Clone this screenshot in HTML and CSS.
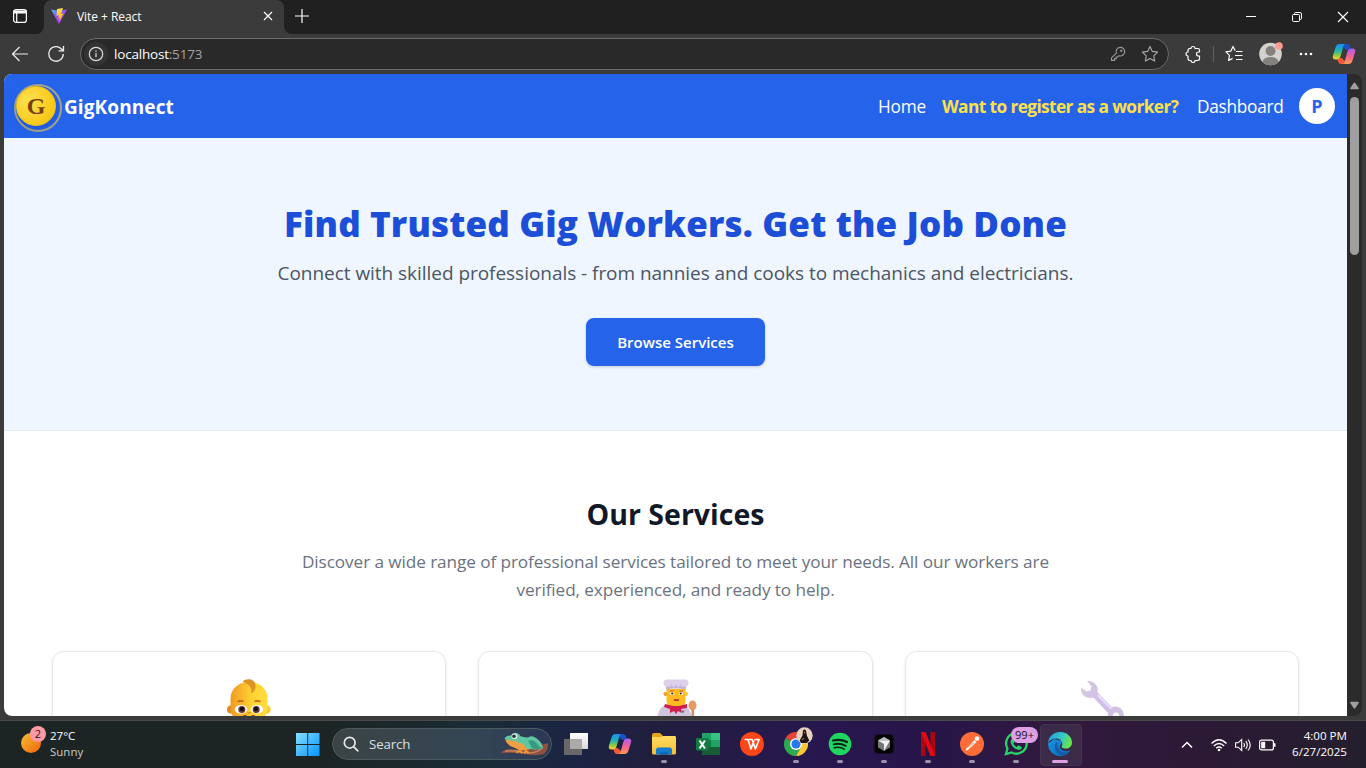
FILE: index.html
```
<!DOCTYPE html>
<html lang="en">
<head>
<meta charset="utf-8">
<title>Vite + React</title>
<link rel="stylesheet" href="styles.css">
</head>
<body>
<svg width="0" height="0" class="defs" aria-hidden="true">
  <defs>
    <linearGradient id="cpA" x1="0" y1="0" x2="0" y2="1"><stop offset="0" stop-color="#1b8df0"/><stop offset=".45" stop-color="#22b5b0"/><stop offset=".75" stop-color="#9acb3c"/><stop offset="1" stop-color="#ffd02e"/></linearGradient>
    <linearGradient id="cpB" x1="0" y1="0" x2="0" y2="1"><stop offset="0" stop-color="#b05cf0"/><stop offset=".5" stop-color="#f0609a"/><stop offset="1" stop-color="#ff9a52"/></linearGradient>
    <linearGradient id="skin" x1="0" y1="0" x2="1" y2="0"><stop offset="0" stop-color="#f09a22"/><stop offset=".6" stop-color="#ffd433"/><stop offset="1" stop-color="#ffdc3e"/></linearGradient>
    <symbol id="copilot" viewBox="0 0 24 24">
      <path fill="#1a4fc8" d="M11 2h4a3 3 0 0 1 2.800 2l1.200 4h-4.500L11 5z"/>
      <path fill="#f05a38" d="M13 22H9a3 3 0 0 1-2.800-2L5 16h4.500l3.500 3z"/>
      <path fill="url(#cpA)" d="M7.500 2H13.500c-1.500.3-1.900 1.300-2.200 2.400L8.800 13.500C8 16 6.800 17.500 4.500 17.500H3.500C1.200 17.500.3 16 .9 13.800L3.600 5.200C4.300 3 5.500 2 7.500 2z"/>
      <path fill="url(#cpB)" d="M16.500 22h-6c1.500-.3 1.900-1.300 2.200-2.400l2.500-9.100c.8-2.500 2-4 4.300-4h1c2.300 0 3.200 1.500 2.600 3.700l-2.700 8.600c-.7 2.200-1.900 3.200-3.900 3.200z"/>
    </symbol>
  </defs>
</svg>
<div class="browser">
  <div class="tabstrip">
    <div class="workspace">
      <svg width="16" height="16" viewBox="0 0 16 16" fill="none" stroke="#fff" stroke-width="1.200"><rect x="1.600" y="1.600" width="12.800" height="12.800" rx="2.500"/><path d="M2 3h12v2H2z" fill="#fff"/><path d="M4.700 5v9"/></svg>
    </div>
    <div class="tab">
      <svg width="16" height="16" viewBox="0 0 16 16"><defs><linearGradient id="v1" x1="0" y1="0" x2=".7" y2="1"><stop offset="0" stop-color="#41b8ff"/><stop offset=".5" stop-color="#9a50ff"/><stop offset="1" stop-color="#b636ff"/></linearGradient><linearGradient id="v2" x1="0" y1="0" x2="0" y2="1"><stop offset="0" stop-color="#ffe04a"/><stop offset="1" stop-color="#ffa800"/></linearGradient></defs><path fill="url(#v1)" d="M0 1.500L8 16l8-14.500L8 3z"/><path fill="url(#v2)" d="M12 0L6 1.100l-.4 6.700 2.300-.5-.7 3.200 1.600-.5-.9 4.300 4.600-8.700-2.500.5z"/></svg>
      <span class="tab-title">Vite + React</span>
      <svg width="10" height="10" viewBox="0 0 10 10" stroke="#fff" stroke-width="1.200"><path d="M1 1l8 8M9 1L1 9"/></svg>
    </div>
    <svg class="plus" width="14" height="14" viewBox="0 0 14 14" stroke="#fff" stroke-width="1.200"><path d="M7 0v14M0 7h14"/></svg>
    <div class="winctl">
      <svg width="12" height="12" viewBox="0 0 12 12" stroke="#fff" fill="none"><path d="M1 5.500h10"/></svg>
      <svg width="12" height="12" viewBox="0 0 12 12" stroke="#fff" fill="none"><rect x="1.500" y="3.500" width="7" height="7" rx="1"/><path d="M3.500 3.500V2.700A1.200 1.200 0 0 1 4.700 1.500H9A1.500 1.500 0 0 1 10.500 3v4.300A1.200 1.200 0 0 1 9.300 8.500h-.8"/></svg>
      <svg width="12" height="12" viewBox="0 0 12 12" stroke="#fff" stroke-width="1.200"><path d="M1 1l10 10M11 1L1 11"/></svg>
    </div>
  </div>
  <div class="toolbar">
    <svg class="back" width="18" height="16" viewBox="0 0 18 16" fill="none" stroke="#eee" stroke-width="1.200"><path d="M17 8H1.500M8.500 1l-7 7 7 7"/></svg>
    <svg class="reload" width="18" height="18" viewBox="0 0 18 18" fill="none" stroke="#eee" stroke-width="1.300"><path d="M16.300 9a7.300 7.300 0 1 1-2.100-5.200l1.800 1.900M16.500 1v4.900h-4.900"/></svg>
    <div class="urlbar">
      <span class="info"><svg width="16" height="16" viewBox="0 0 16 16" fill="none" stroke="#ddd" stroke-width="1.200"><circle cx="8" cy="8" r="6.700"/><path d="M8 7v4.200M8 4.600v1.300"/></svg></span>
      <span class="url">localhost<span class="port">:5173</span></span>
      <svg class="key" width="16" height="16" viewBox="0 0 16 16" fill="none" stroke="#999" stroke-width="1.100"><path d="M6.400 7.200A4.300 4.300 0 1 1 9 9.700L7.700 11H6.200v1.600H4.600v1.800H1.500v-2.500z"/><circle cx="11.300" cy="4.800" r=".6" fill="#999"/></svg>
      <svg class="star" width="18" height="18" viewBox="0 0 18 18" fill="none" stroke="#aaa" stroke-width="1.100" stroke-linejoin="round"><path d="M9 1.500l2.300 4.900 5.300.7-3.900 3.700 1 5.300L9 13.500l-4.700 2.600 1-5.300L1.400 7.100l5.300-.7z"/></svg>
    </div>
    <svg class="ext" width="16" height="18" viewBox="0 0 16 18" fill="none" stroke="#fff" stroke-width="1.200" stroke-linejoin="round"><path d="M6 3.500a2 2 0 0 1 4 0h2.800a1.700 1.700 0 0 1 1.700 1.700V7h-1a2 2 0 0 0 0 4h1v2.800a1.700 1.700 0 0 1-1.700 1.700H10a2 2 0 0 1-4 0H4.700A1.700 1.700 0 0 1 3 13.800V11a2 2 0 0 1 0-4V5.200a1.700 1.700 0 0 1 1.700-1.700z"/></svg>
    <span class="sep"></span>
    <svg class="favs" width="18" height="18" viewBox="0 0 18 18" fill="none" stroke="#fff" stroke-width="1.200" stroke-linejoin="round"><path d="M10.200 5.800L8 1.500 5.800 6.200l-4.900.7 3.600 3.500-.9 5.100 4-2.100M11 6.500h6.500M10 10.500h7.500M11 14.500h6.500"/></svg>
    <svg class="profile" width="24" height="24" viewBox="0 0 24 24"><clipPath id="pc"><circle cx="11.500" cy="12" r="11.300"/></clipPath><circle cx="11.500" cy="12" r="11.300" fill="#d4d2cf"/><g clip-path="url(#pc)" fill="#84817d"><circle cx="11.500" cy="9" r="5"/><ellipse cx="11.500" cy="20" rx="8" ry="5"/></g><circle cx="20" cy="4" r="3.800" fill="#ff9a94"/></svg>
    <svg class="more" width="14" height="4" viewBox="0 0 14 4" fill="#fff"><circle cx="2" cy="2" r="1.300"/><circle cx="7" cy="2" r="1.300"/><circle cx="12" cy="2" r="1.300"/></svg>
    <svg class="cp" width="24" height="24"><use href="#copilot"/></svg>
  </div>
  <div class="viewport">
    <main class="page">
      <header class="nav">
        <div class="coin"><span class="coin-face">G</span></div>
        <span class="brand">GigKonnect</span>
        <nav class="links"><a class="l-home">Home</a><a class="l-want">Want to register as a worker?</a><a class="l-dash">Dashboard</a><span class="avatar">P</span></nav>
      </header>
      <section class="hero">
        <h1>Find Trusted Gig Workers. Get the Job Done</h1>
        <p>Connect with skilled professionals - from nannies and cooks to mechanics and electricians.</p>
        <button>Browse Services</button>
      </section>
      <section class="services">
        <h2>Our Services</h2>
        <p class="line1">Discover a wide range of professional services tailored to meet your needs. All our workers are</p>
        <p class="line2">verified, experienced, and ready to help.</p>
        <div class="cards">
          <div class="card">
            <svg width="48" height="48" viewBox="0 0 48 48">
              <circle cx="6" cy="32.500" r="4" fill="#dc8b24"/><circle cx="41.500" cy="32.500" r="4" fill="#ffc62e"/>
              <path fill="url(#skin)" d="M5.500 31V22C5.500 11 14 5 24 5s18.500 6 18.500 17v9c0 10-8 15-18.500 15S5.500 41 5.500 31z"/>
              <path fill="#dc9427" d="M17.500 4.500C22 .5 30 2 30.500 8c.3 4-1.500 7.500-4.500 8.500 1.500-5-1-9-8.500-12z"/>
              <ellipse cx="16" cy="32.200" rx="6.300" ry="4.300" fill="#fff"/><ellipse cx="32" cy="32.200" rx="6.300" ry="4.300" fill="#fff"/>
              <circle cx="16.800" cy="32.500" r="3.500" fill="#6d3a3e"/><circle cx="31.200" cy="32.500" r="3.500" fill="#6d3a3e"/><circle cx="17" cy="32" r="2.200" fill="#160c14"/><circle cx="31" cy="32" r="2.200" fill="#160c14"/>
              <path d="M12.500 24.800q3-1.500 6-.3M29.500 24.500q3-1.200 6 .3" stroke="#c9661e" stroke-width="1.800" fill="none"/>
              <path d="M22.500 35.500q1.500 1.200 3 0" stroke="#e38b20" stroke-width="1.500" fill="none"/><path d="M18.500 38.700h3M26.500 38.700h3" stroke="#a4411d" stroke-width="1.300"/>
            </svg>
          </div>
          <div class="card">
            <svg width="48" height="48" viewBox="0 0 48 48">
              <path d="M6 46c0-12 4-18 12-19h11c8 1 12 7 12 19z" fill="#cfc5dc"/>
              <path d="M15.500 12h19v11q0 8-9.500 8t-9.500-8z" fill="#ffbd22"/><circle cx="14.500" cy="17" r="2" fill="#f0a020"/><circle cx="35" cy="17" r="2" fill="#ffc52d"/>
              <path d="M14 27l8 2h6l8-2v4l-6 1 1 4-4-2-2 3-2-3-4 2v-4l-6-2z" fill="#d01f4c"/>
              <path d="M15 8h20v4.500q-10-2-20 0z" fill="#c5b5dc"/><rect x="12.500" y="2.500" width="25" height="7" rx="3.500" fill="#dcd0eb"/><path d="M20 7v4M25 7v4M30 7v4" stroke="#b5a2cf" stroke-width=".6"/>
              <path d="M19 14h3.500M28.500 14h3.500" stroke="#a8601e" stroke-width="1"/><ellipse cx="21" cy="16.500" rx="2" ry="1.500" fill="#fff"/><ellipse cx="30" cy="16.500" rx="2" ry="1.500" fill="#fff"/><circle cx="21.200" cy="16.500" r="1.100" fill="#42232b"/><circle cx="29.800" cy="16.500" r="1.100" fill="#42232b"/><path d="M23 22.500q2.500 1.500 5 0" stroke="#b62d25" stroke-width="1.500" fill="none"/>
              <ellipse cx="41.500" cy="28.500" rx="4" ry="5" fill="#e69a66"/><path d="M40.500 32h2.500v14h-2.500z" fill="#dc8c58"/><circle cx="32" cy="34.500" r="1.300" fill="#7d718d"/>
            </svg>
          </div>
          <div class="card">
            <svg width="48" height="48" viewBox="0 0 48 48"><defs><linearGradient id="wr" x1="0" y1="0" x2="1" y2="1"><stop offset="0" stop-color="#d2cbd9"/><stop offset=".5" stop-color="#d3bdec"/><stop offset="1" stop-color="#cdc2d8"/></linearGradient></defs><path fill="url(#wr)" d="M9 4c7-1 12 5 10.300 11L34 30c6-2 12 2 12 9 0 6-4 8-8 8-6 0-9-5-8-11L15.500 20.500C8 22.500 2 17.500 3.200 10.500l5.300 4 4-1 1-4z"/><path d="M20 18l13.500 13.500" stroke="#e9dcfa" stroke-width="2.500"/><circle cx="38" cy="38.500" r="3" fill="#fff"/></svg>
          </div>
        </div>
      </section>
    </main>
    <div class="scrollbar">
      <svg width="9" height="8" viewBox="0 0 9 8" fill="#9f9f9f"><path d="M3.600 1q.9-1.200 1.800 0L8.700 6q.5 1.200-.7 1.200H1Q-.2 7.200.3 6z"/></svg>
      <span class="thumb"></span>
      <svg class="down" width="9" height="8" viewBox="0 0 9 8" fill="#9f9f9f"><path d="M3.600 7q.9 1.200 1.800 0L8.700 2Q9.200.8 8 .8H1Q-.2.8.3 2z"/></svg>
    </div>
  </div>
</div>
<footer class="taskbar">
  <div class="weather">
    <div class="sun"><span class="count">2</span></div>
    <div class="wtext"><span class="temp">27°C</span><span class="cond">Sunny</span></div>
  </div>
  <div class="apps">
    <div class="app"><svg width="24" height="24" viewBox="0 0 24 24"><defs><linearGradient id="win" gradientUnits="userSpaceOnUse" x1="0" y1="0" x2="24" y2="24"><stop stop-color="#8be2ff"/><stop offset="1" stop-color="#0092fa"/></linearGradient></defs><path fill="url(#win)" d="M0 1h11.300v11H0zM12.200 1h11.300v11H12.200zM0 13h11.300v11H0zM12.200 13h11.300v11H12.200z"/></svg></div>
    <div class="search">
      <svg width="16" height="16" viewBox="0 0 16 16" fill="none" stroke="#e8e8e8" stroke-width="1.700" stroke-linecap="round"><circle cx="6.700" cy="6.700" r="5.400"/><path d="M10.800 10.800l4 4"/></svg>
      <span class="sword">Search</span>
      <svg class="frog" width="48" height="24" viewBox="0 0 48 24"><path d="M0 21q3-4 9-4 10 1 18 1 8-1 13-5l7-2q1 6-4 11-7 2-17 .5-12-2.500-26-1.500z" fill="#8f513d"/><path d="M4 19.500q10-2 18 1 13 2 20-5" stroke="#c4836b" stroke-width="1.500" fill="none"/><path d="M4 7.500q2 6 9 8l6 3 10-1 3-4-12-6z" fill="#f0a043"/><path d="M3.500 7q1-3.500 6.500-3.500 2-3 5-2.500 3.500.3 4 3 4.500 1.500 8 1.500 4-2.500 8 .5 6 4 7 10-5 2.500-12 1-7 0-8-5-4-.2-7-3-5 0-11.500-2z" fill="#5fc6a1"/><path d="M27 8.500q6-1.500 9 3t6 4.500q-5 2-11 .5" fill="#379c7f"/><path d="M18 14l1 5M23 14l2 5M19 19l-4 1.500M19 19l2 2M25 19l3 2M25 19l-2 2" stroke="#f29935" stroke-width="1.800"/><circle cx="13.500" cy="4.200" r="2.900" fill="#dfeee6"/><circle cx="13" cy="4.200" r="1.800" fill="#253540"/></svg>
    </div>
    <div class="app"><svg width="24" height="24" viewBox="0 0 24 24"><defs><linearGradient id="tw" x1="0" y1="0" x2="0" y2="1"><stop stop-color="#fff"/><stop offset="1" stop-color="#d8d8d8"/></linearGradient></defs><rect x="6" y="1" width="18" height="16" fill="url(#tw)"/><rect x="0" y="7" width="18" height="16" fill="#686868"/><path d="M6 7h12v10H6z" fill="#aaa"/></svg></div>
    <div class="app"><svg width="24" height="24"><use href="#copilot"/></svg></div>
    <div class="app run"><svg width="24" height="24" viewBox="0 0 24 24"><defs><linearGradient id="fo" x1="0" y1="0" x2="0" y2="1"><stop stop-color="#ffdc65"/><stop offset="1" stop-color="#f8bd31"/></linearGradient></defs><path d="M0 3q0-2 2-2h6l3 3v3H0z" fill="#e5a51b"/><path d="M0 5h9l2-1h12q1 0 1 1.500V21q0 1.500-1.500 1.500h-21Q0 22.500 0 21z" fill="url(#fo)"/><path d="M4 22.500V18q0-2.500 2.500-2.500h11q2.500 0 2.500 2.500v4.500z" fill="#137bd0"/><path d="M8 22.500v-2h8v2z" fill="#0961ad"/></svg></div>
    <div class="app"><svg width="24" height="24" viewBox="0 0 24 24"><path d="M6 1h9v7H6z" fill="#21a366"/><path d="M15 1h9v7h-9z" fill="#33c481"/><path d="M6 8h9v7H6z" fill="#107c41"/><path d="M15 8h9v7h-9z" fill="#21a366"/><path d="M6 15h18v8H6z" fill="#185c37"/><rect y="6" width="12.500" height="12.500" rx="1" fill="#107c41"/><path d="M3.500 8.500l5.500 8M9 8.500l-5.500 8" stroke="#fff" stroke-width="2"/></svg></div>
    <div class="app"><svg width="24" height="24" viewBox="0 0 24 24"><circle cx="12" cy="12" r="12" fill="#ff4617"/><path d="M4.500 7.500H8l3 9.500 3-8.500M8.800 7.500h3.400l3.200 9.500 3.700-9.500h-4.800" fill="none" stroke="#fff" stroke-width="1.600" stroke-linejoin="round"/></svg></div>
    <div class="app run"><svg width="24" height="24" viewBox="0 0 24 24"><path d="M12 12L1.600 6A12 12 0 0 1 22.400 6z" fill="#ea4335"/><path d="M12 12L1.600 6A12 12 0 0 0 12 24l5-9z" fill="#2da94f"/><path d="M12 24l5-9 0-9h5.400A12 12 0 0 1 12 24z" fill="#fcc934"/><circle cx="12" cy="12" r="6" fill="#fff"/><circle cx="12" cy="12" r="4.600" fill="#2877ed"/></svg><svg class="chrome-user" width="17" height="17" viewBox="0 0 17 17"><circle cx="8.500" cy="8.500" r="8.200" fill="#e6d2c1"/><path d="M7 3.500q1.500-2 3 0l.8 5 2.500 5-2.500 2.500H5l-1.300-2.500 2.800-5z" fill="#1c1414"/><path d="M8.500 4.500v2M6 13l2-2" stroke="#9d5939" stroke-width="1.300"/></svg></div>
    <div class="app run"><svg width="24" height="24" viewBox="0 0 24 24"><circle cx="12" cy="12" r="11.300" fill="#1ed760"/><g fill="none" stroke="#142018" stroke-linecap="round"><path d="M5 8.500q7.500-2 14 1.500" stroke-width="2.200"/><path d="M5.700 12.300q6.300-1.700 12 1.500" stroke-width="1.900"/><path d="M6.300 15.800q5.500-1.300 10 1.300" stroke-width="1.500"/></g></svg></div>
    <div class="app run"><svg width="24" height="24" viewBox="0 0 24 24"><rect x="2.500" y="2.500" width="19" height="19" rx="4" fill="#050505"/><path d="M12 5l6 3.500v7L12 19l-6-3.500v-7z" fill="#777"/><path d="M6 8.500L12 5l6 3.500z" fill="#bbb"/><path d="M6 8.500h12L12 19v-7z" fill="#f1f1f1"/></svg></div>
    <div class="app run"><svg width="24" height="24" viewBox="0 0 24 24"><path d="M5 0h4.500v24H5zM14.500 0H19v24h-4.500z" fill="#a90811"/><path d="M5 0h4.500L19 24h-4.500z" fill="#e50914"/></svg></div>
    <div class="app run"><svg width="24" height="24" viewBox="0 0 24 24"><circle cx="12" cy="12" r="12" fill="#ff6c37"/><path d="M5.500 19l1-2.500 8-8.500 2 2-8 7.500z" fill="#fff"/><circle cx="17" cy="6.500" r="2.300" fill="#fff"/><path d="M8 15l6-4M9 17l5-3" stroke="#ff6c37" stroke-width=".7"/></svg></div>
    <div class="app run"><svg width="24" height="24" viewBox="0 0 24 24"><path d="M2 22l1.500-5.500A10.300 10.300 0 1 1 7.500 20.400z" fill="none" stroke="#25d366" stroke-width="2.300"/><path d="M8.500 6.500l2 4-1.200 1.300q1.300 2.300 3.600 3.300l1.600-1.800 3.500 2q-.5 2.700-3 2.700Q8 16.800 6.500 9.800q0-2.300 2-3.300z" fill="#25d366"/></svg><span class="badge">99+</span></div>
    <div class="app run active"><svg width="24" height="24" viewBox="0 0 24 24"><defs><linearGradient id="ed" x1="0" y1="0" x2="1" y2=".3"><stop stop-color="#249fe0"/><stop offset=".6" stop-color="#33c8cc"/><stop offset="1" stop-color="#67e34c"/></linearGradient><linearGradient id="ed2" x1="0" y1="0" x2="1" y2="1"><stop stop-color="#1c91df"/><stop offset="1" stop-color="#0a6cc0"/></linearGradient></defs><path fill="url(#ed2)" d="M0 11.500A12 12 0 0 0 12 24c5 0 8.500-2.500 10.500-5.800-4 2-10 .8-10.800-3.200L14 9 6 7z"/><path fill="url(#ed)" d="M0 11.500C.5 4 6 0 12 0c7 0 12 5 12 10.500 0 4-3 6-6.200 6-3 0-4.800-1-4-2.300C15.500 11 13 6.500 8.700 6.500 4 6.500.6 8.500 0 11.500z"/><path fill="#135ba8" d="M9.500 10c-4 2-3.500 9 1.500 12.500 4 1.600 8-.3 10.500-3-5 2.200-10 .5-11.500-4-.6-2-.5-4-.5-5.500z"/></svg></div>
  </div>
  <div class="tray">
    <svg class="chev" width="12" height="8" viewBox="0 0 12 8" fill="none" stroke="#fff" stroke-width="1.500"><path d="M1 6.500l5-5 5 5"/></svg>
    <svg class="wifi" width="16" height="14" viewBox="0 0 16 14" fill="none" stroke="#fff" stroke-width="1.300"><path d="M.5 5.500q7.500-7.500 15 0M2.800 8q5.200-5 10.400 0M5.200 10.200q2.800-2.500 5.600 0"/><circle cx="8" cy="12" r="1.300" fill="#fff" stroke="none"/></svg>
    <svg class="vol" width="16" height="14" viewBox="0 0 16 14" fill="none" stroke="#fff" stroke-width="1.100"><path d="M.6 4.800h2.500L6.700 1.500v11L3.100 9.200H.6zM8.700 5q1.500 2 0 4M10.800 3.200q3 3.800 0 7.600M13 1.500q4.500 5.500 0 11"/></svg>
    <svg class="bat" width="17" height="12" viewBox="0 0 17 12"><rect x=".6" y="1.100" width="13.800" height="9.800" rx="2" fill="none" stroke="#fff" stroke-width="1.200"/><rect x="2.200" y="2.800" width="4" height="6.400" fill="#fff"/><path d="M15 4.300h1.500v3.400H15z" fill="#fff"/></svg>
    <div class="clock"><span class="time">4:00 PM</span><span class="date">6/27/2025</span></div>
  </div>
</footer>
</body>
</html>
```
FILE: styles.css
```
* { box-sizing: border-box; }
body { margin: 0; width: 1366px; height: 768px; overflow: hidden; display: flex; flex-direction: column; background: #3b3b3b; font-family: "Open Sans", "Noto Sans", sans-serif; }
svg { display: block; flex: none; }
.defs { position: absolute; }
span, a, h1, h2, p { white-space: nowrap; }
.browser { height: 721px; display: flex; flex-direction: column; border-bottom: 1px solid #4a4a4c; }

.tabstrip { height: 34px; flex: none; display: flex; align-items: center; background: linear-gradient(#202020 24px, #3b3b3b 24px) 0 0 / 292px 34px no-repeat #202020; }
.workspace { width: 44px; height: 34px; padding: 8px 0 0 12px; border-bottom-right-radius: 8px; background: #202020; }
.tab { width: 240px; height: 34px; display: flex; align-items: center; padding: 0 11px 2px 7px; background: #3b3b3b; border-radius: 8px 8px 0 0; }
.tab-title { flex: 1; margin-left: 10px; color: #fff; font-size: 12px; letter-spacing: -0.05px; }
.plus { box-sizing: content-box; padding: 9px 0 11px 11px; background: #202020; border-bottom-left-radius: 8px; }
.winctl { margin-left: auto; display: flex; gap: 34px; padding-right: 17px; }

.toolbar { height: 40px; flex: none; display: flex; align-items: center; }
.back { margin-left: 11px; }
.reload { margin-left: 18px; }
.urlbar { width: 1089px; height: 32px; margin-left: 15px; border: 1px solid #6b6b6b; border-radius: 16px; background: #292929; display: flex; align-items: center; }
.info { width: 24px; height: 24px; margin-left: 3px; border-radius: 50%; background: #333; display: grid; place-items: center; }
.url { margin-left: 6px; color: #fff; font-size: 13.5px; letter-spacing: -0.2px; }
.port { color: #a3a3a3; }
.key { margin-left: auto; }
.star { margin: 0 9px 0 15px; }
.ext { margin-left: 16px; }
.sep { width: 1px; height: 16px; margin-left: 12px; background: #606060; }
.favs { margin-left: 11px; }
.profile { margin-left: 16px; }
.more { margin-left: 16px; }
.cp { margin-left: 19px; }

.viewport { width: 1358px; height: 642px; margin-left: 4px; border-radius: 8px; overflow: hidden; display: flex; background: #2b2b2b; }
.page { width: 1343px; height: 642px; overflow: hidden; background: #fff; border-radius: 0 0 0 6px; }
.nav { height: 64px; background: #2563eb; display: flex; align-items: center; padding: 0 12px 0 10px; }
.coin { width: 48px; height: 48px; margin-top: 4px; border: 2px solid #a3a68b; border-radius: 50%; flex: none; }
.coin-face { width: 40px; height: 40px; display: grid; place-items: center; margin: 0; border-radius: 50%; border: 1px solid #efc017; background: radial-gradient(circle at 30% 35%, #ffe04e, #facc20 60%, #eebc13); color: #78400f; font: bold 24px/1 "Liberation Serif", serif; box-shadow: 0 3px 6px rgba(0, 0, 60, .15); }
.brand { margin: 2px 0 0 2px; color: #fff; font-size: 19px; font-weight: 700; letter-spacing: 0.1px; line-height: 28px; }
.links { margin-left: auto; display: flex; align-items: center; gap: 16px; color: #fff; font-size: 17.3px; line-height: 28px; }
.links a { padding-top: 2px; }
.l-home { width: 48px; letter-spacing: -0.2px; }
.l-want { width: 239px; color: #fde047; font-weight: 700; letter-spacing: -0.6px; }
.l-dash { width: 86px; letter-spacing: -0.3px; }
.avatar { width: 36px; height: 36px; border-radius: 50%; background: #fff; color: #2563eb; display: grid; place-items: center; font-size: 18px; font-weight: 700; line-height: 20px; }

.hero { height: 293px; padding-top: 63px; background: #eff6ff; border-bottom: 1px solid #e2e8f0; display: flex; flex-direction: column; align-items: center; }
h1 { margin: 0; height: 45px; line-height: 45px; font-size: 35px; font-weight: 800; color: #1d4ed8; letter-spacing: 0.15px; }
.hero p { margin: 13px 0 31px; line-height: 28px; font-size: 19px; color: #4b5563; letter-spacing: -0.04px; }
button { width: 179px; height: 48px; padding: 0; border: 0; border-radius: 8px; background: #2563eb; color: #fff; font: 600 15px/24px "Open Sans", "Noto Sans", sans-serif; letter-spacing: 0; box-shadow: 0 1px 3px rgba(0, 0, 0, .18); }
.services { padding-top: 64px; display: flex; flex-direction: column; align-items: center; }
h2 { margin: 0 0 15px; line-height: 38px; font-size: 28.5px; font-weight: 700; color: #111827; }
.services p { margin: 0; line-height: 28px; font-size: 17.2px; color: #6b7280; letter-spacing: -0.09px; }
.cards { margin-top: 47px; width: 1247px; display: grid; grid-template-columns: repeat(3, 1fr); gap: 32px; }
.card { height: 220px; padding-top: 25px; border: 1px solid #e5e7eb; border-radius: 12px; display: flex; justify-content: center; align-items: flex-start; box-shadow: 0 1px 3px rgba(0, 0, 0, .1); }
.scrollbar { width: 15px; display: flex; flex-direction: column; align-items: center; padding: 8px 0 7px; }
.thumb { width: 9px; height: 158px; margin-top: 7px; border-radius: 5px; background: #9f9f9f; }
.down { margin-top: auto; }

.taskbar { height: 47px; display: flex; background: linear-gradient(90deg, #1c2524 0%, #1c2524 24%, #1a2c36 35%, #1b2443 42%, #211e3e 48%, #27174f 60%, #271549 68%, #31193f 77%, #2c1935 88%, #231f2d 100%); }
.weather { width: 286px; display: flex; }
.sun { position: relative; width: 20px; height: 20px; margin: 12px 0 0 21px; border-radius: 50%; background: linear-gradient(135deg, #f7bd38, #f06405); }
.count { position: absolute; left: 9px; top: -7px; width: 16px; height: 16px; border-radius: 50%; background: #ff99a4; color: #26191b; font-size: 11px; line-height: 16px; text-align: center; }
.wtext { margin: 7px 0 0 9px; display: flex; flex-direction: column; font-size: 11.5px; line-height: 16px; color: #fff; }
.cond { color: #c8cccb; }
.apps { width: 796px; display: flex; }
.app { width: 44px; height: 47px; display: flex; justify-content: center; padding-top: 11px; position: relative; }
.search { width: 220px; height: 32px; margin: 7px 2px 0; border: 1px solid #4d5b60; border-radius: 16px; background: linear-gradient(90deg, #3b4444, #344655 65%, #2c3856); display: flex; align-items: center; padding: 0 2px 0 10px; }
.sword { margin-left: 10px; color: #dce0e2; font-size: 13.3px; letter-spacing: -0.15px; }
.frog { margin-left: auto; }
.run::after { content: ""; position: absolute; left: 19px; top: 39px; width: 6px; height: 3px; border-radius: 2px; background: #9b94aa; }
.active::before { content: ""; position: absolute; left: 2px; top: 3px; width: 40px; height: 40px; border-radius: 4px; background: #3b2a48; border: 1px solid #453451; }
.active svg { position: relative; }
.active::after { left: 14px; width: 16px; background: #dda0e5; }
.chrome-user { position: absolute; left: 22px; top: 6px; }
.badge { position: absolute; left: 17px; top: 6px; width: 27px; height: 16px; border-radius: 8px; background: #dda0e5; color: #171017; font-size: 11px; line-height: 16px; text-align: center; }
.tray { flex: 1; display: flex; align-items: center; padding-right: 19px; }
.chev { margin-left: 99px; }
.wifi { margin-left: 18px; }
.vol { margin-left: 8px; }
.bat { margin-left: 8px; }
.clock { margin: -1px 0 0 auto; display: flex; flex-direction: column; align-items: flex-end; color: #fff; font-size: 11.6px; line-height: 16px; }
```
